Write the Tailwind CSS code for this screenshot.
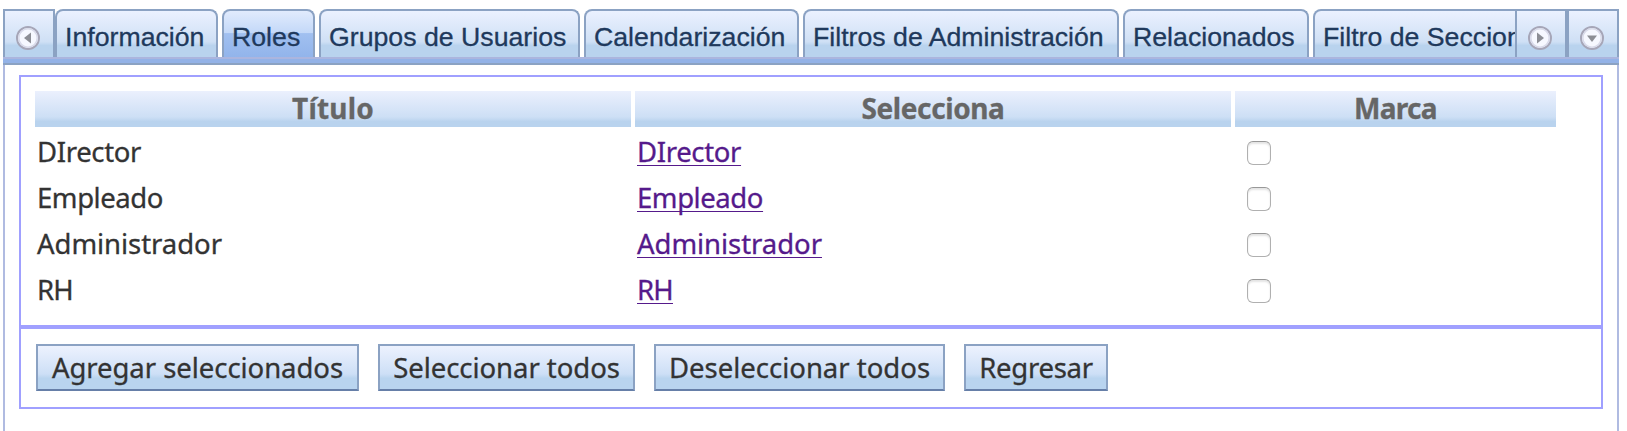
<!DOCTYPE html>
<html lang="es">
<head>
<meta charset="utf-8">
<title>Roles</title>
<script src="https://cdn.jsdelivr.net/npm/@tailwindcss/browser@4"></script>
</head>
<body class="h-[431px] overflow-hidden bg-white pt-[9px] pl-[3px] font-['Noto_Sans','Open_Sans',sans-serif] text-[27.5px] text-[#333] [-webkit-text-stroke:0.3px]">
<div class="flex h-[422px] w-[1616px] flex-col">
  <!-- tab strip -->
  <nav class="flex h-[48px] shrink-0 font-['Liberation_Sans',Arial,sans-serif] text-[26.7px] text-[#20395c]">
    <button class="flex w-[52px] shrink-0 justify-center border-2 border-b-0 border-[#8ba2c3] bg-linear-to-b from-[#ebf1ff] from-0% via-[#cfe0f5] via-67% to-[#b9d3ee] to-75% pt-[14px]">
      <svg class="-ml-[2px] size-[26px]" viewBox="0 0 26 26"><circle cx="13" cy="13" r="11" fill="#f6f8ff" stroke="#a6a6b8" stroke-width="2"/><circle cx="13" cy="13" r="9.2" fill="none" stroke="#d8daea" stroke-width="1.5"/><path d="M16 7.5v11L9 13z" fill="#8c8e95"/></svg>
    </button>
    <div class="flex w-[1460px] shrink-0 gap-1 overflow-hidden leading-[53px] whitespace-nowrap">
      <div class="w-[163px] shrink-0 rounded-t-[8px] border-2 border-b-0 border-[#8ba2c3] bg-linear-to-b from-[#ebf1ff] from-0% via-[#cfe0f5] via-67% to-[#b9d3ee] to-75% pl-[8px]">Información</div>
      <div class="w-[93px] shrink-0 rounded-t-[8px] border-2 border-b-0 border-[#8ba2c3] bg-linear-[180deg,#e1ebfd_0%,#c3d8f8_48%,#a1c0f0_49%,#92b4eb_100%] pl-[8px]">Roles</div>
      <div class="w-[261px] shrink-0 rounded-t-[8px] border-2 border-b-0 border-[#8ba2c3] bg-linear-to-b from-[#ebf1ff] from-0% via-[#cfe0f5] via-67% to-[#b9d3ee] to-75% pl-[8px]">Grupos de Usuarios</div>
      <div class="w-[215px] shrink-0 rounded-t-[8px] border-2 border-b-0 border-[#8ba2c3] bg-linear-to-b from-[#ebf1ff] from-0% via-[#cfe0f5] via-67% to-[#b9d3ee] to-75% pl-[8px]">Calendarización</div>
      <div class="w-[316px] shrink-0 rounded-t-[8px] border-2 border-b-0 border-[#8ba2c3] bg-linear-to-b from-[#ebf1ff] from-0% via-[#cfe0f5] via-67% to-[#b9d3ee] to-75% pl-[8px]">Filtros de Administración</div>
      <div class="w-[186px] shrink-0 rounded-t-[8px] border-2 border-b-0 border-[#8ba2c3] bg-linear-to-b from-[#ebf1ff] from-0% via-[#cfe0f5] via-67% to-[#b9d3ee] to-75% pl-[8px]">Relacionados</div>
      <div class="w-[260px] shrink-0 rounded-t-[8px] border-2 border-b-0 border-[#8ba2c3] bg-linear-to-b from-[#ebf1ff] from-0% via-[#cfe0f5] via-67% to-[#b9d3ee] to-75% pl-[8px]">Filtro de Secciones</div>
    </div>
    <button class="flex w-[52px] shrink-0 justify-center border-2 border-b-0 border-[#8ba2c3] bg-linear-to-b from-[#ebf1ff] from-0% via-[#cfe0f5] via-67% to-[#b9d3ee] to-75% pt-[14px]">
      <svg class="-ml-[2px] size-[26px]" viewBox="0 0 26 26"><circle cx="13" cy="13" r="11" fill="#f6f8ff" stroke="#a6a6b8" stroke-width="2"/><circle cx="13" cy="13" r="9.2" fill="none" stroke="#d8daea" stroke-width="1.5"/><path d="M10 7.5v11l7-5.500z" fill="#8c8e95"/></svg>
    </button>
    <button class="flex w-[52px] shrink-0 justify-center border-2 border-b-0 border-[#8ba2c3] bg-linear-to-b from-[#ebf1ff] from-0% via-[#cfe0f5] via-67% to-[#b9d3ee] to-75% pt-[14px]">
      <svg class="-ml-[2px] size-[26px]" viewBox="0 0 26 26"><circle cx="13" cy="13" r="11" fill="#f6f8ff" stroke="#a6a6b8" stroke-width="2"/><circle cx="13" cy="13" r="9.2" fill="none" stroke="#d8daea" stroke-width="1.5"/><path d="M8 10.500h10L13 17z" fill="#8c8e95"/></svg>
    </button>
  </nav>
  <div class="h-[8px] shrink-0 border-t-2 border-b-2 border-t-[#abb5de] border-b-[#8ba2c3] bg-[#93b2e7]"></div>

  <!-- tab content -->
  <main class="grow border-x-2 border-[#b0bbe1] px-[14px] pt-[10px]">
    <section class="h-[252px] border-2 border-[#a0a0ff] px-[14px] pt-[14px]">
      <div class="grid grid-cols-[596px_596px_321px] gap-x-1 text-center text-[28px] leading-[35px] font-bold text-[#666]">
        <div class="h-9 bg-linear-to-b from-[#ebf0fd] from-0% via-[#cddff5] via-72% to-[#b9d3ee] to-85% tracking-[0.2px]">Título</div>
        <div class="h-9 bg-linear-to-b from-[#ebf0fd] from-0% via-[#cddff5] via-72% to-[#b9d3ee] to-85% tracking-[-0.4px]">Selecciona</div>
        <div class="h-9 bg-linear-to-b from-[#ebf0fd] from-0% via-[#cddff5] via-72% to-[#b9d3ee] to-85% tracking-[-0.7px]">Marca</div>
      </div>
      <div class="mt-[3px] grid grid-cols-[596px_596px_321px] gap-x-1 pl-[2px] leading-[43px]">
        <div class="h-[46px] tracking-[-0.35px]">DIrector</div>
        <div class="h-[46px] tracking-[-0.35px]"><a class="text-[#551a8b] underline decoration-1 underline-offset-[3px] [text-decoration-skip-ink:none]">DIrector</a></div>
        <div class="flex h-[46px] items-center pl-[10px]"><span class="size-6 rounded-[6px] border border-[#b0b0b0] border-t-[#989898] bg-white shadow-[inset_0_2px_2px_#e4e4e4]"></span></div>
        <div class="h-[46px] tracking-[-0.43px]">Empleado</div>
        <div class="h-[46px] tracking-[-0.43px]"><a class="text-[#551a8b] underline decoration-1 underline-offset-[3px] [text-decoration-skip-ink:none]">Empleado</a></div>
        <div class="flex h-[46px] items-center pl-[10px]"><span class="size-6 rounded-[6px] border border-[#b0b0b0] border-t-[#989898] bg-white shadow-[inset_0_2px_2px_#e4e4e4]"></span></div>
        <div class="h-[46px] tracking-[-0.05px]">Administrador</div>
        <div class="h-[46px] tracking-[-0.05px]"><a class="text-[#551a8b] underline decoration-1 underline-offset-[3px] [text-decoration-skip-ink:none]">Administrador</a></div>
        <div class="flex h-[46px] items-center pl-[10px]"><span class="size-6 rounded-[6px] border border-[#b0b0b0] border-t-[#989898] bg-white shadow-[inset_0_2px_2px_#e4e4e4]"></span></div>
        <div class="h-[46px] tracking-[-0.75px]">RH</div>
        <div class="h-[46px] tracking-[-0.75px]"><a class="text-[#551a8b] underline decoration-1 underline-offset-[3px] [text-decoration-skip-ink:none]">RH</a></div>
        <div class="flex h-[46px] items-center pl-[10px]"><span class="size-6 rounded-[6px] border border-[#b0b0b0] border-t-[#989898] bg-white shadow-[inset_0_2px_2px_#e4e4e4]"></span></div>
      </div>
    </section>
    <section class="flex h-[82px] gap-[19px] border-2 border-[#a0a0ff] pt-[15px] pl-[15px] leading-[44px] whitespace-nowrap">
      <button class="h-[47px] w-[323px] border-2 border-[#8ba2c3] border-b-[#667fa8] bg-linear-to-b from-[#edf2fe] from-0% via-[#cddff6] via-65% to-[#b9d4ef] to-75% tracking-[-0.05px]">Agregar seleccionados</button>
      <button class="h-[47px] w-[257px] border-2 border-[#8ba2c3] border-b-[#667fa8] bg-linear-to-b from-[#edf2fe] from-0% via-[#cddff6] via-65% to-[#b9d4ef] to-75% tracking-[-0.05px]">Seleccionar todos</button>
      <button class="h-[47px] w-[291px] border-2 border-[#8ba2c3] border-b-[#667fa8] bg-linear-to-b from-[#edf2fe] from-0% via-[#cddff6] via-65% to-[#b9d4ef] to-75%">Deseleccionar todos</button>
      <button class="h-[47px] w-[144px] border-2 border-[#8ba2c3] border-b-[#667fa8] bg-linear-to-b from-[#edf2fe] from-0% via-[#cddff6] via-65% to-[#b9d4ef] to-75% tracking-[-0.3px]">Regresar</button>
    </section>
  </main>
</div>
</body>
</html>
